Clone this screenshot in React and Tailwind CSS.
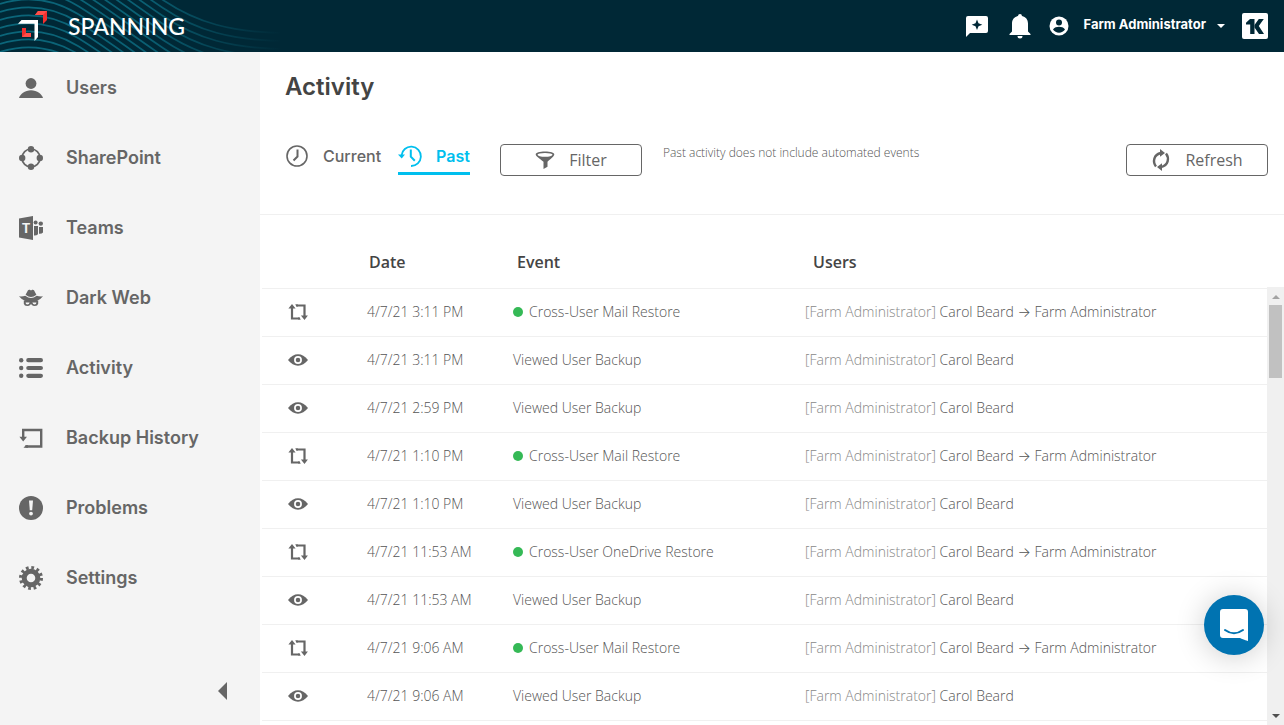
import React, { useState } from 'react'
import clsx from 'clsx'

const ICONS = {
    users: (
        <>
            <circle cx="12" cy="7.5" r="5.4" />
            <path d="M0 22c.6-3.400 6-7.800 12-7.800s11.400 4.400 12 7.800z" />
        </>
    ),
    sharepoint: (
        <>
            <circle cx="12" cy="12" r="9" fill="none" stroke="currentColor" strokeWidth="1.7" />
            <circle cx="12" cy="3.200" r="3.200" />
            <circle cx="12" cy="20.800" r="3.200" />
            <circle cx="3.200" cy="12" r="3.200" />
            <circle cx="20.800" cy="12" r="3.200" />
        </>
    ),
    teams: (
        <>
            <path d="M0 2.600 14 0v24L0 21.400z" />
            <text x="7" y="16.500" textAnchor="middle" fontSize="13" fontWeight="700" fill="#f4f4f4">T</text>
            <circle cx="16.600" cy="6.400" r="2" />
            <circle cx="21.800" cy="7.600" r="2.200" />
            <path d="M15 10h4v8.200q-1.500 1.400-4 1.200zM20 11h4v5.500q-1.300 1.600-4 1.300z" />
        </>
    ),
    darkweb: (
        <>
            <path d="M6.600 8.800 9 4.300q.8-.9 1.800-.5l1.200.6 1.200-.6q1-.4 1.800.5l2.400 4.500q-5.400 4.600-10.800 0z" />
            <path d="M0 10.300q3.500.4 6.300-.6 5.700 4.600 11.400 0 2.800 1 6.300.6-3 3.800-6.300 4.700H6.300Q3 14.100 0 10.300z" />
            <path d="M4.800 14.500h14.400v3.300q-.6 2.300-3.300 2.300-2.600 0-3.200-1.700h-1.400q-.6 1.700-3.200 1.700-2.700 0-3.300-2.300z" />
            <path d="M6.600 16.600h4q-.3 1.900-2.200 1.900t-1.800-1.900zm6.800 0h4q.1 1.900-1.800 1.900t-2.200-1.900z" fill="#f4f4f4" />
        </>
    ),
    activity: (
        <>
            <circle cx="2.200" cy="4.200" r="2.200" />
            <circle cx="2.200" cy="12" r="2.200" />
            <circle cx="2.200" cy="19.800" r="2.200" />
            <path d="M9.300 4.200h12.600M9.300 12h12.600M9.300 19.800h12.600" stroke="currentColor" strokeWidth="4.200" strokeLinecap="round" />
        </>
    ),
    history: (
        <>
            <path d="M4.200 12V4h18v16.500H6.500" fill="none" stroke="currentColor" strokeWidth="2.400" />
            <path d="M.4 10.800H8l-3.800 4.600zM4.500 21.700l2.200-2.400H9v2.400z" />
        </>
    ),
    problems: (
        <>
            <circle cx="12" cy="12" r="12" />
            <path d="M10 4.600h4l-.8 9.600h-2.400z" fill="#f4f4f4" />
            <circle cx="12" cy="17.600" r="1.900" fill="#f4f4f4" />
        </>
    ),
    settings: (
        <>
            <circle cx="12" cy="12" r="6.800" fill="none" stroke="currentColor" strokeWidth="5" />
            <circle cx="12" cy="12" r="10.300" fill="none" stroke="currentColor" strokeWidth="3.400" strokeDasharray="2.700 2.694" />
        </>
    ),
}

const NAV = [
    { id: 'users', label: 'Users' },
    { id: 'sharepoint', label: 'SharePoint' },
    { id: 'teams', label: 'Teams' },
    { id: 'darkweb', label: 'Dark Web' },
    { id: 'activity', label: 'Activity' },
    { id: 'history', label: 'Backup History' },
    { id: 'problems', label: 'Problems' },
    { id: 'settings', label: 'Settings' },
]

const EVENTS = [
    { date: '4/7/21 3:11 PM', restore: 'Cross-User Mail Restore' },
    { date: '4/7/21 3:11 PM' },
    { date: '4/7/21 2:59 PM' },
    { date: '4/7/21 1:10 PM', restore: 'Cross-User Mail Restore' },
    { date: '4/7/21 1:10 PM' },
    { date: '4/7/21 11:53 AM', restore: 'Cross-User OneDrive Restore' },
    { date: '4/7/21 11:53 AM' },
    { date: '4/7/21 9:06 AM', restore: 'Cross-User Mail Restore' },
    { date: '4/7/21 9:06 AM' },
]

const WAVES = Array.from({ length: 17 }, (_, i) => -76 + i * 8)

function Waves() {
    return (
        <svg className="absolute left-0 top-0" width="300" height="52" aria-hidden="true">
            <defs>
                <linearGradient id="fade" x1="0" x2="290" y1="0" y2="0" gradientUnits="userSpaceOnUse">
                    <stop offset="0" stopColor="#0b667a" />
                    <stop offset="0.5" stopColor="#0b667a" stopOpacity="0.9" />
                    <stop offset="0.75" stopColor="#0b667a" stopOpacity="0.4" />
                    <stop offset="0.97" stopColor="#0b667a" stopOpacity="0" />
                </linearGradient>
            </defs>
            {WAVES.map((y) => (
                <path
                    key={y}
                    d={`M0 ${y + 8}C25 ${y} 50 ${y + 1} 78 ${y + 18}S130 ${y + 54} 163 ${y + 76}S230 ${y + 109} 290 ${y + 109}`}
                    fill="none"
                    stroke="url(#fade)"
                    strokeWidth="1.700"
                />
            ))}
        </svg>
    )
}

function Header() {
    return (
        <header className="relative flex h-[52px] shrink-0 items-center justify-between bg-[#002836] pl-[18px] pr-4 text-white">
            <Waves />
            <a href="#home" className="relative flex items-center gap-5">
                <svg width="30" height="30" viewBox="0 0 30 30" aria-hidden="true">
                    <path d="M3.500 9H20v17l-3.500 4V12.800H0z" fill="#fff" />
                    <path d="M20 0h9v9l-4 4V4h-8z" fill="#f2302f" />
                    <path d="M20 0h9l-4 4h-8z" fill="#ff4f4a" />
                    <path d="M4 17h4v5h5l-3 4H4z" fill="#f2302f" />
                    <path d="M8 22h5v4H4z" fill="#ff4f4a" />
                </svg>
                <span className="font-['Lato'] text-[23px] font-medium">SPANNING</span>
            </a>
            <div className="relative flex items-center">
                <button aria-label="What's new" className="mr-5">
                    <svg width="24" height="24" viewBox="0 0 24 24" fill="#fff">
                        <path d="M3 2h18a2 2 0 0 1 2 2v13a2 2 0 0 1-2 2H5l-4 4V4a2 2 0 0 1 2-2z" />
                        <path d="M12 5.500l1.500 3.700 3.800 1.500-3.800 1.500L12 16l-1.500-3.800-3.800-1.500 3.800-1.500z" fill="#002836" />
                    </svg>
                </button>
                <button aria-label="Notifications" className="mr-[18px]">
                    <svg width="22" height="26" viewBox="0 0 22 26" fill="#fff">
                        <path d="M11 1a2 2 0 0 1 2 1.900c3.700.8 6 3.600 6 7.600v8l2.500 2.500v1H.5v-1L3 18.500v-8c0-4 2.300-6.800 6-7.600A2 2 0 0 1 11 1zM8.500 23h5a2.500 2.500 0 0 1-5 0z" />
                    </svg>
                </button>
                <button className="flex items-center font-['Inter'] text-[13px] font-bold">
                    <svg className="mr-[14px]" width="20" height="20" viewBox="0 0 20 20" aria-hidden="true">
                        <circle cx="10" cy="10" r="9.500" fill="#fff" />
                        <circle cx="10" cy="6.500" r="3" fill="#002836" />
                        <path d="M4 13.500c1-2 4-2.700 6-2.700s5 .7 6 2.700c-1.300 2-3.500 3.200-6 3.200s-4.700-1.200-6-3.200z" fill="#002836" />
                    </svg>
                    <span className="pb-0.5">Farm Administrator</span>
                    <svg className="ml-2.5 mr-4" width="10" height="6" viewBox="0 0 10 6" aria-hidden="true">
                        <path d="M1 1h8L5 5z" fill="#fff" />
                    </svg>
                </button>
                <a href="#one" aria-label="KaseyaOne">
                    <svg width="26" height="26" viewBox="0 0 26 26">
                        <rect width="26" height="26" rx="2" fill="#fff" />
                        <path d="M8 6h4.500v15H8.200v-9.500H4V9.800z" fill="#002836" />
                        <path d="M12.500 12 16.800 6h5l-5 7 5.200 8h-5l-4.500-6.500z" fill="#002836" />
                    </svg>
                </a>
            </div>
        </header>
    )
}

function Sidebar({ active, onSelect }) {
    return (
        <aside className="flex w-[260px] shrink-0 flex-col bg-[#f4f4f4] text-[#666]">
            <nav>
                {NAV.map((item) => (
                    <a
                        key={item.id}
                        href={`#${item.id}`}
                        aria-current={item.id === active ? 'page' : undefined}
                        onClick={() => onSelect(item.id)}
                        className="flex h-[70px] items-center gap-[23px] pl-[19px] pt-0.5 font-['Inter'] text-lg font-semibold"
                    >
                        <svg width="24" height="24" viewBox="0 0 24 24" fill="currentColor" aria-hidden="true">
                            {ICONS[item.id]}
                        </svg>
                        {item.label}
                    </a>
                ))}
            </nav>
            <button aria-label="Collapse menu" className="mb-[25px] mr-8 mt-auto self-end">
                <svg width="10" height="18" viewBox="0 0 10 18" fill="currentColor">
                    <path d="M9 0v18L0 9z" />
                </svg>
            </button>
        </aside>
    )
}

function EventIcon({ restore }) {
    return (
        <svg width="20" height="20" viewBox="0 0 20 20" fill="#666" aria-hidden="true">
            {restore ? (
                <>
                    <path d="M4 6v10.500h8M8 3.500h8.500V14" fill="none" stroke="#666" strokeWidth="2.200" />
                    <path d="M.4 6.500 4 2l3.600 4.500zM12.900 13.500h7L16.500 18zM7 2.400h3v2.200H8.800zM13 17.600h-3v-2.200h1.200z" />
                </>
            ) : (
                <>
                    <path d="M0 10q4.500-5.700 10-5.700T20 10q-4.500 5.700-10 5.700T0 10z" />
                    <circle cx="10" cy="10" r="3.100" fill="none" stroke="#fff" strokeWidth="1.700" />
                </>
            )}
        </svg>
    )
}

function ActivityTable() {
    return (
        <div className="flex min-h-0 flex-1 overflow-hidden pl-0.5">
            <table className="w-full table-fixed self-start text-left text-sm text-[#555]">
                <thead>
                    <tr className="h-[73px] border-b border-[#f0f0f0] text-base text-[#444]">
                        <th className="w-[105px]" aria-label="Type" />
                        <th className="w-[146px] pl-0.5 pt-[22px] font-semibold">Date</th>
                        <th className="w-[292px] pl-1 pt-[22px] font-semibold">Event</th>
                        <th className="pl-2 pt-[22px] font-semibold">Users</th>
                    </tr>
                </thead>
                <tbody className="font-light">
                    {EVENTS.map((event, i) => (
                        <tr key={i} className="h-12 border-b border-[#f0f0f0]">
                            <td className="pl-[26px]"><EventIcon restore={event.restore} /></td>
                            <td>{event.date}</td>
                            <td>
                                {event.restore && <span className="mr-1.5 inline-block size-2.5 rounded-full bg-[#35b956]" />}
                                {event.restore || 'Viewed User Backup'}
                            </td>
                            <td>
                                <span className="text-[#888]">[Farm Administrator]</span> Carol Beard
                                {event.restore && <> <span className="font-['Inter']">→</span> Farm Administrator</>}
                            </td>
                        </tr>
                    ))}
                </tbody>
            </table>
            <div className="flex w-[17px] shrink-0 flex-col" aria-hidden="true">
                <div className="h-[73px] shrink-0 border-b border-[#f0f0f0]" />
                <div className="flex flex-1 flex-col items-center bg-[#f0f0f0] py-1.5">
                    <svg width="8" height="5" viewBox="0 0 8 5"><path d="M0 5l4-4 4 4z" fill="#a3a3a3" /></svg>
                    <div className="mt-1.5 h-[73px] w-[13px] bg-[#c1c1c1]" />
                    <svg className="mt-auto" width="8" height="5" viewBox="0 0 8 5"><path d="M0 0h8L4 4z" fill="#505050" /></svg>
                </div>
            </div>
        </div>
    )
}

export default function App() {
    const [page, setPage] = useState('activity')
    const [tab, setTab] = useState('past')

    const tabClass = (id) => clsx(
        "flex h-9 items-center border-b-3 font-['Inter'] text-base",
        tab === id ? 'border-[#00bfee] font-semibold text-[#00bfee]' : 'border-transparent font-medium text-[#666]'
    )
    const buttonClass = 'mt-[5px] flex h-8 w-[142px] items-center justify-center gap-3.5 rounded border border-[#666] text-base text-[#666]'

    return (
        <div className="flex h-screen flex-col overflow-hidden bg-white font-['Open_Sans',sans-serif]">
            <Header />
            <div className="flex min-h-0 flex-1">
                <Sidebar active={page} onSelect={setPage} />
                <main className="flex min-w-0 flex-1 flex-col">
                    <h1 className="px-[25px] pt-[19px] font-['Inter'] text-2xl font-semibold text-[#444]">Activity</h1>
                    <div className="flex items-start border-b border-[#f0f0f0] pb-[38px] pl-[25px] pr-4 pt-9">
                        <div className="flex gap-[17px]">
                            <button className={tabClass('current')} onClick={() => setTab('current')}>
                                <svg className="mr-3.5" width="24" height="24" viewBox="0 0 24 24" fill="none" stroke="currentColor" strokeWidth="1.600">
                                    <circle cx="12" cy="12" r="10" />
                                    <path d="M12.500 5.500v7l-4 4" strokeWidth="2" />
                                </svg>
                                Current
                            </button>
                            <button className={tabClass('past')} onClick={() => setTab('past')}>
                                <svg className="mr-3.5" width="24" height="24" viewBox="0 0 24 24" fill="none" stroke="currentColor" strokeWidth="1.800">
                                    <path d="M3.500 11.500A9.700 9.700 0 1 1 13 22" />
                                    <path d="M12.800 5.500v7.200l4 4" strokeWidth="2" />
                                    <path d="M0 10.500h7l-3.300 4z" fill="currentColor" stroke="none" />
                                </svg>
                                Past
                            </button>
                        </div>
                        <button className={clsx(buttonClass, 'ml-[30px]')}>
                            <svg width="20" height="20" viewBox="0 0 20 20" fill="currentColor" aria-hidden="true">
                                <path d="M.7 4.500C.7 2.700 4.500 1.500 10 1.500s9.300 1.200 9.300 3c0 1.500-3.300 4.200-6.800 7.200v5L8.500 19v-7.300C4 8 .7 6 .7 4.500z" />
                                <ellipse cx="10" cy="4.800" rx="7.500" ry="1.900" fill="#fff" />
                            </svg>
                            Filter
                        </button>
                        <p className="ml-[21px] mt-1.5 text-xs font-light text-[#555]">Past activity does not include automated events</p>
                        <button className={clsx(buttonClass, 'ml-auto')}>
                            <svg width="20" height="22" viewBox="0 0 20 22" fill="none" stroke="currentColor" strokeWidth="2.400" aria-hidden="true">
                                <path d="M5 17.500C1.500 13 2.500 5.500 10 4M15 4.500c3.500 4.500 2.500 12-5 13.500" />
                                <path d="M9 0l5 4-5 3.800zM11 14.200v7.800l-5-4z" fill="currentColor" stroke="none" />
                            </svg>
                            Refresh
                        </button>
                    </div>
                    <ActivityTable />
                </main>
            </div>
            <button aria-label="Open chat" className="fixed bottom-[70px] right-5 flex size-[60px] items-center justify-center rounded-full bg-[#0073b1] shadow-[0_2px_30px_rgba(0,0,0,0.2)]">
                <svg width="28" height="32" viewBox="0 0 28 32" aria-hidden="true">
                    <path d="M3 0h22a3 3 0 0 1 3 3v29s-4-1.200-8-3H3a3 3 0 0 1-3-3V3a3 3 0 0 1 3-3z" fill="#fff" />
                    <path d="M5 21q9 6.500 18 0" fill="none" stroke="#0073b1" strokeWidth="2" strokeLinecap="round" />
                </svg>
            </button>
        </div>
    )
}
